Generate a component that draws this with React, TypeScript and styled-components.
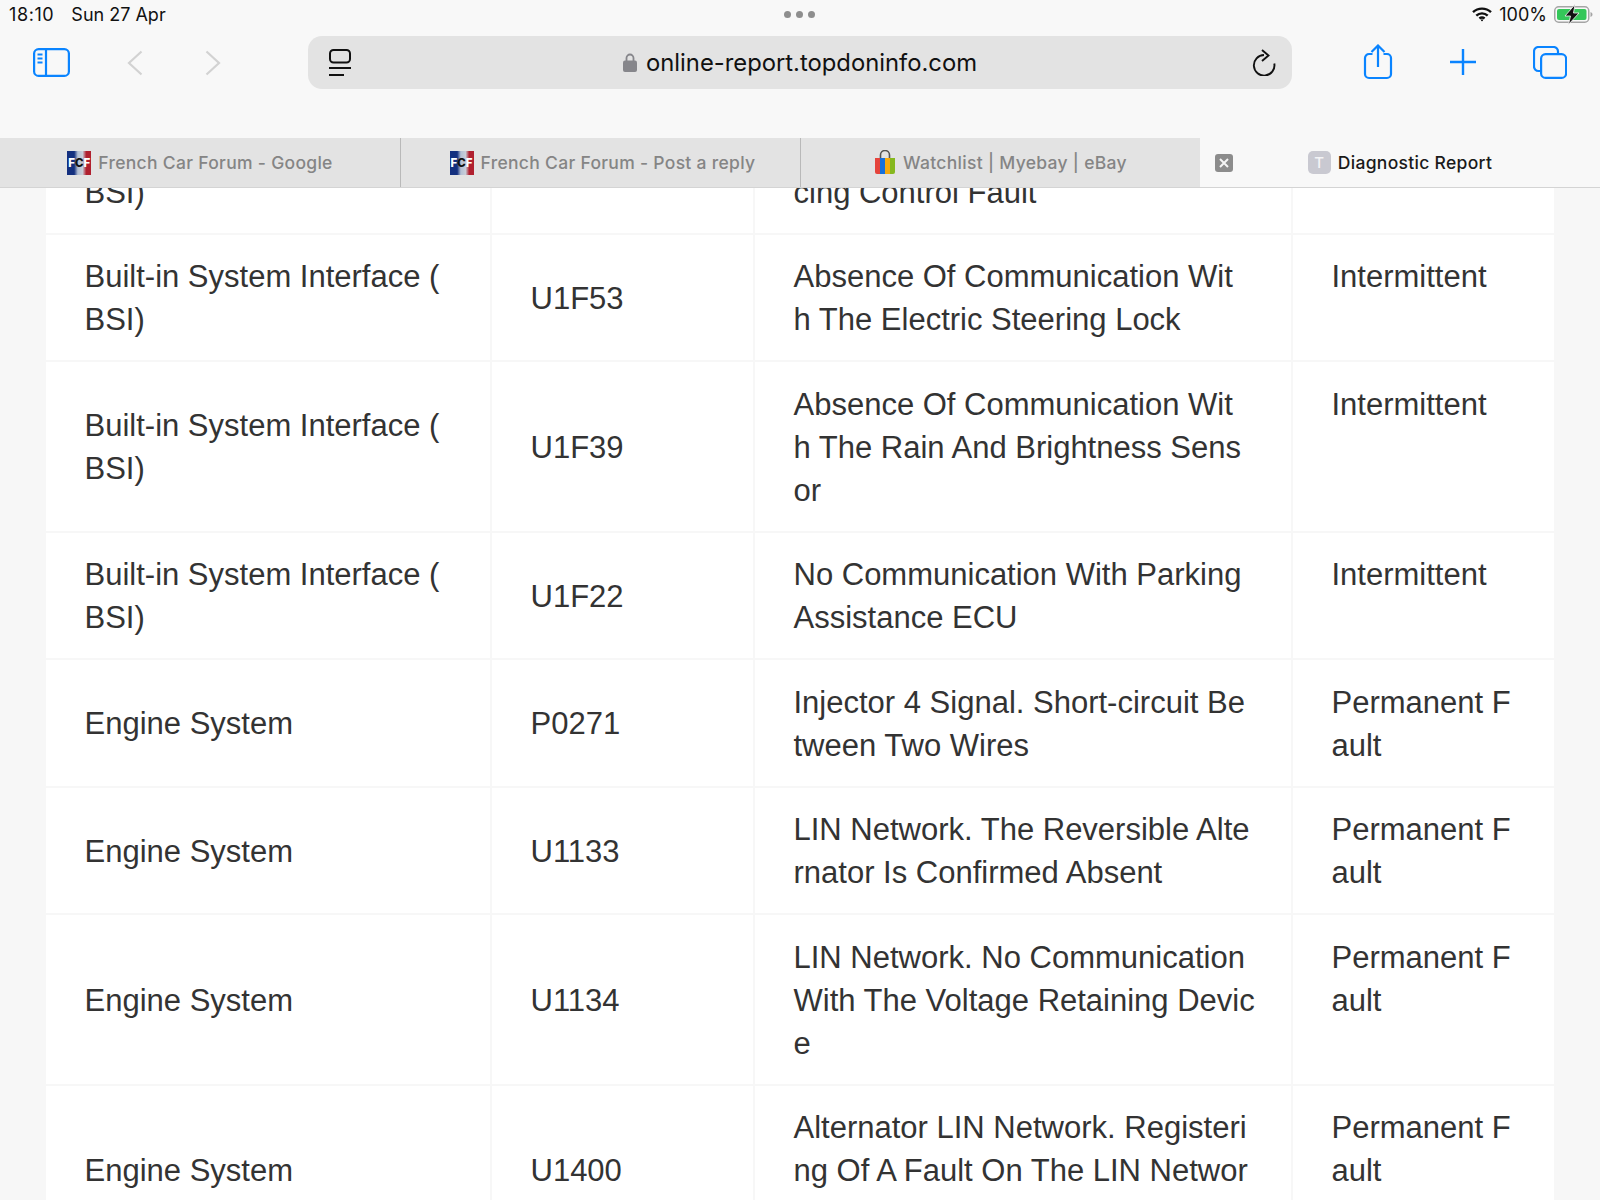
import styled, { createGlobalStyle } from 'styled-components';

const GlobalStyle = createGlobalStyle`
	html, body {
		margin: 0;
		padding: 0;
		background: #f7f7f7;
	}
`;

const Page = styled.div`
	display: flex;
	flex-direction: column;
	width: 1600px;
	height: 1200px;
	overflow: hidden;
	font-family: Inter, 'Liberation Sans', sans-serif;
`;

const Chrome = styled.header`
	flex: none;
	background: #f8f8f8;
`;

const StatusBar = styled.div`
	display: grid;
	grid-template-columns: 1fr auto 1fr;
	align-items: center;
	height: 29px;
	padding: 0 7px 0 9px;
	font-size: 18px;
	color: #111;
`;

const StatusLeft = styled.div`
	display: flex;
	gap: 17px;
`;

const Clock = styled.span`
	letter-spacing: 0.6px;
`;

const StatusRight = styled.div`
	display: flex;
	align-items: center;
	justify-content: flex-end;
	gap: 7px;
`;

const Battery = styled.svg`
	overflow: visible;
`;

const Dots = styled.div`
	display: flex;
	gap: 5px;
	margin-left: -3px;
`;

const Dot = styled.span`
	width: 7px;
	height: 7px;
	border-radius: 50%;
	background: #8e8e8e;
`;

const Toolbar = styled.div`
	display: grid;
	grid-template-columns: 308px 984px 308px;
	align-items: center;
	height: 53px;
	padding: 7px 0 49px;
`;

const LeftTools = styled.div`
	display: flex;
	align-items: center;
	padding-left: 33px;
`;

const RightTools = styled.div`
	display: flex;
	align-items: center;
	gap: 57px;
	padding-left: 71px;
`;

const ToolIcon = styled.svg<{ $gap?: number; $lift?: number }>`
	display: block;
	flex: none;
	margin-left: ${({ $gap }) => $gap || 0}px;
	margin-bottom: ${({ $lift }) => $lift || 0}px;
`;

const UrlBar = styled.div`
	display: flex;
	align-items: center;
	height: 53px;
	padding: 0 16px 0 21px;
	border-radius: 14px;
	background: #e3e3e3;
`;

const UrlCenter = styled.div`
	flex: 1;
	display: flex;
	align-items: center;
	justify-content: center;
	gap: 9px;
	padding-right: 3px;
`;

const UrlText = styled.span`
	font-size: 23.8px;
	color: #111;
	white-space: nowrap;
`;

const TabBar = styled.div`
	display: grid;
	grid-template-columns: repeat(4, 1fr);
	height: 49px;
	border-bottom: 1px solid #d4d4d4;
`;

const Tab = styled.div<{ $active?: boolean; $divider?: boolean; $inset?: number }>`
	position: relative;
	display: flex;
	align-items: center;
	justify-content: center;
	gap: 7px;
	padding-left: ${({ $inset }) => $inset || 0}px;
	background: ${({ $active }) => ($active ? '#f8f8f8' : '#e3e3e3')};
	color: ${({ $active }) => ($active ? '#1a1a1a' : '#858585')};
	border-left: ${({ $divider }) => ($divider ? '1px solid #b9b9b9' : 'none')};
	font-size: 17.5px;
	font-weight: 500;
	letter-spacing: 0.3px;
	white-space: nowrap;
`;

const FcfIcon = styled.span`
	flex: none;
	width: 24px;
	height: 24px;
	display: flex;
	align-items: center;
	justify-content: center;
	background: linear-gradient(90deg, #14307f 0 30%, #b4c0d4 45%, #c9ced8 65%, #b0202f 80% 100%);
	font-size: 11.5px;
	font-weight: 800;
	letter-spacing: 0;
	color: #fff;

	b {
		color: #111;
		font-weight: 800;
	}
`;

const LetterIcon = styled.span`
	flex: none;
	width: 23px;
	height: 23px;
	display: flex;
	align-items: center;
	justify-content: center;
	border-radius: 5px;
	background: #c9c9d1;
	color: #f4f4f6;
	font-size: 15px;
	font-weight: 500;
`;

const CloseBox = styled.span`
	position: absolute;
	left: 15px;
	top: 16px;
	width: 18px;
	height: 18px;
	border-radius: 3px;
	background: #8c8c8c;
	display: flex;
	align-items: center;
	justify-content: center;
`;

const Viewport = styled.main`
	flex: 1;
	overflow: hidden;
	padding: 0 46px;
`;

const Rows = styled.div`
	display: flex;
	flex-direction: column;
	gap: 2px;
	margin-top: -81px;
`;

const Row = styled.div`
	display: grid;
	grid-template-columns: 444px 261px 536px 261px;
	gap: 2px;
`;

const Cell = styled.div<{ $middle?: boolean }>`
	display: flex;
	flex-direction: column;
	justify-content: ${({ $middle }) => ($middle ? 'center' : 'flex-start')};
	padding: 20.5px 38.5px 19px;
	background: #fff;
	color: #333;
	font-family: 'Liberation Sans', Arial, sans-serif;
	font-size: 31px;
	line-height: 43px;
	white-space: nowrap;
`;

const Line = styled.span`
	display: block;
	min-height: 43px;
`;

interface ReportRow {
	system: string[];
	code: string;
	description: string[];
	status: string[];
}

const BSI = ['Built-in System Interface (', 'BSI)'];
const INTERMITTENT = ['Intermittent'];
const PERMANENT = ['Permanent F', 'ault'];

const rows: ReportRow[] = [
	{ system: ['', 'BSI)'], code: '', description: ['', 'cing Control Fault'], status: [] },
	{ system: BSI, code: 'U1F53', description: ['Absence Of Communication Wit', 'h The Electric Steering Lock'], status: INTERMITTENT },
	{ system: BSI, code: 'U1F39', description: ['Absence Of Communication Wit', 'h The Rain And Brightness Sens', 'or'], status: INTERMITTENT },
	{ system: BSI, code: 'U1F22', description: ['No Communication With Parking', 'Assistance ECU'], status: INTERMITTENT },
	{ system: ['Engine System'], code: 'P0271', description: ['Injector 4 Signal. Short-circuit Be', 'tween Two Wires'], status: PERMANENT },
	{ system: ['Engine System'], code: 'U1133', description: ['LIN Network. The Reversible Alte', 'rnator Is Confirmed Absent'], status: PERMANENT },
	{ system: ['Engine System'], code: 'U1134', description: ['LIN Network. No Communication', 'With The Voltage Retaining Devic', 'e'], status: PERMANENT },
	{ system: ['Engine System'], code: 'U1400', description: ['Alternator LIN Network. Registeri', 'ng Of A Fault On The LIN Networ', ''], status: PERMANENT },
];

const BLUE = '#0a84ff';

function BagIcon() {
	return (
		<svg width="22" height="25" viewBox="0 0 22 25">
			<path d="M6.5 8V5a4.5 4.5 0 0 1 9 0v3" fill="none" stroke="#555" strokeWidth="1.6" />
			<path d="M1 8h5v16H3a2 2 0 0 1-2-2z" fill="#e5443c" />
			<rect x="6" y="8" width="5" height="16" fill="#1670dd" />
			<rect x="11" y="8" width="5" height="16" fill="#f5a90f" />
			<path d="M16 8h5v14a2 2 0 0 1-2 2h-3z" fill="#86b81f" />
		</svg>
	);
}

function App() {
	return (
		<Page>
			<GlobalStyle />
			<Chrome>
				<StatusBar>
					<StatusLeft>
						<Clock>18:10</Clock>
						<span>Sun 27 Apr</span>
					</StatusLeft>
					<Dots>
						<Dot />
						<Dot />
						<Dot />
					</Dots>
					<StatusRight>
						<svg width="20" height="15" viewBox="0 0 20 15" fill="none" stroke="#111" strokeWidth="2.4">
							<path d="M1 5.2a13 13 0 0 1 18 0" />
							<path d="M4.3 8.6a8.4 8.4 0 0 1 11.4 0" />
							<path d="M7.4 11.5a4 4 0 0 1 5.2 0" />
							<circle cx="10" cy="13.2" r="1" fill="#111" stroke="none" />
						</svg>
						<span>100%</span>
						<Battery width="39" height="17" viewBox="0 0 39 17">
							<rect x="0.75" y="0.75" width="34" height="15.5" rx="4" fill="none" stroke="#a5a5a5" strokeWidth="1.5" />
							<rect x="3" y="3" width="29.5" height="11" rx="2" fill="#34c759" />
							<path d="M36.5 6v5c1.2-.4 2-1.4 2-2.500s-.8-2.100-2-2.500z" fill="#a5a5a5" />
							<path d="M21-1.500L11 10h5.500L14.500 18.500 25 7h-5.500z" fill="#111" stroke="#f8f8f8" strokeWidth="0.8" />
						</Battery>
					</StatusRight>
				</StatusBar>
				<Toolbar>
					<LeftTools>
						<ToolIcon width="37" height="29" viewBox="0 0 37 29" fill="none" stroke={BLUE} strokeWidth="2.2">
							<rect x="1.100" y="1.100" width="34.800" height="26.800" rx="4.500" />
							<path d="M13 1v27" />
							<path d="M4.500 6.500h5M4.500 10.500h5M4.500 14.500h5" strokeWidth="1.800" />
						</ToolIcon>
						<ToolIcon $gap={57} width="16" height="26" viewBox="0 0 16 26" fill="none" stroke="#d2d2d2" strokeWidth="2.200">
							<path d="M14.500 1.500L2 13l12.500 11.500" />
						</ToolIcon>
						<ToolIcon $gap={62} width="16" height="26" viewBox="0 0 16 26" fill="none" stroke="#d2d2d2" strokeWidth="2.200">
							<path d="M1.500 1.500L14 13 1.500 24.500" />
						</ToolIcon>
					</LeftTools>
					<UrlBar>
						<ToolIcon width="22" height="27" viewBox="0 0 22 27" fill="none" stroke="#111" strokeWidth="2">
							<rect x="1" y="1" width="20" height="12.500" rx="3.500" />
							<path d="M0 19h22M0 26h15" />
						</ToolIcon>
						<UrlCenter>
							<svg width="14" height="19" viewBox="0 0 14 19">
								<path d="M3.500 8V5a3.500 3.500 0 0 1 7 0v3" fill="none" stroke="#86868b" strokeWidth="1.800" />
								<rect x="0" y="7.500" width="14" height="11.500" rx="2" fill="#86868b" />
							</svg>
							<UrlText>online-report.topdoninfo.com</UrlText>
						</UrlCenter>
						<ToolIcon $lift={1} width="24" height="28" viewBox="0 0 24 28" fill="none" stroke="#111" strokeWidth="1.900">
							<path d="M12 7A10.300 10.300 0 1 0 22.300 15.500" />
							<path d="M10 2L16.500 7.500 10 13" />
						</ToolIcon>
					</UrlBar>
					<RightTools>
						<ToolIcon $lift={2} width="30" height="36" viewBox="0 0 30 36" fill="none" stroke={BLUE} strokeWidth="2.200">
							<path d="M9.500 10H6a4 4 0 0 0-4 4v16a4 4 0 0 0 4 4h18a4 4 0 0 0 4-4V14a4 4 0 0 0-4-4h-3.500" />
							<path d="M15 23V2M8.500 8L15 1.500 21.500 8" />
						</ToolIcon>
						<ToolIcon $lift={1} width="26" height="26" viewBox="0 0 26 26" fill="none" stroke={BLUE} strokeWidth="2.400">
							<path d="M13 0v26M0 13h26" />
						</ToolIcon>
						<ToolIcon $lift={1} width="34" height="33" viewBox="0 0 34 33" fill="none" stroke={BLUE} strokeWidth="2.200">
							<path d="M25 8V5.500A4.500 4.500 0 0 0 20.500 1H5.500A4.500 4.500 0 0 0 1 5.500v15A4.500 4.500 0 0 0 5.500 25H8" />
							<rect x="8.100" y="8.100" width="25" height="23.800" rx="4.500" />
						</ToolIcon>
					</RightTools>
				</Toolbar>
				<TabBar>
					<Tab>
						<FcfIcon>F<b>C</b>F</FcfIcon>
						French Car Forum - Google
					</Tab>
					<Tab $divider $inset={4}>
						<FcfIcon>F<b>C</b>F</FcfIcon>
						French Car Forum - Post a reply
					</Tab>
					<Tab $divider>
						<BagIcon />
						Watchlist | Myebay | eBay
					</Tab>
					<Tab $active>
						<CloseBox>
							<svg width="10" height="10" viewBox="0 0 10 10" fill="none" stroke="#f4f4f4" strokeWidth="2">
								<path d="M1 1l8 8M9 1l-8 8" />
							</svg>
						</CloseBox>
						<LetterIcon>T</LetterIcon>
						Diagnostic Report
					</Tab>
				</TabBar>
			</Chrome>
			<Viewport>
				<Rows>
					{rows.map((row, index) => (
						<Row key={index}>
							<Cell $middle>
								{row.system.map((line, i) => (
									<Line key={i}>{line}</Line>
								))}
							</Cell>
							<Cell $middle>{row.code}</Cell>
							<Cell $middle>
								{row.description.map((line, i) => (
									<Line key={i}>{line}</Line>
								))}
							</Cell>
							<Cell>
								{row.status.map((line, i) => (
									<Line key={i}>{line}</Line>
								))}
							</Cell>
						</Row>
					))}
				</Rows>
			</Viewport>
		</Page>
	);
}

export default App;
